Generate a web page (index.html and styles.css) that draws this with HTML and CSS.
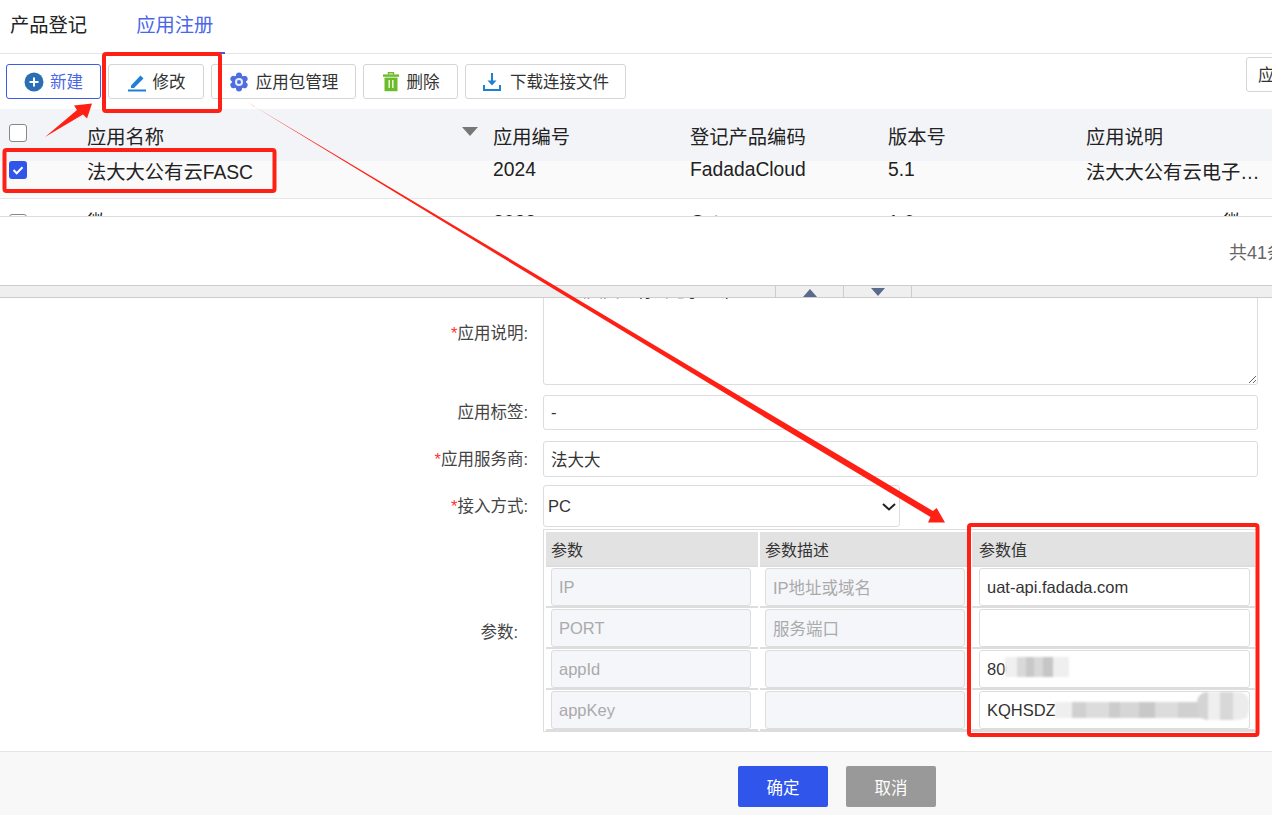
FILE: index.html
```html
<!DOCTYPE html>
<html lang="zh-CN">
  <head>
    <meta charset="UTF-8" />
    <title>应用注册</title>
    <link rel="stylesheet" href="styles.css">
  </head>
  <body>
    <div class="tabs">
      <a class="tab">产品登记</a>
      <a class="tab tab-active">应用注册</a>
    </div>

    <div class="toolbar">
      <button class="btn btn-primary">
        <svg width="20" height="20" viewBox="0 0 20 20"><circle cx="10" cy="10" r="9.5" fill="#2a6fb5"/><path d="M10 5.5v9M5.5 10h9" stroke="#fff" stroke-width="2"/></svg>
        新建
      </button>
      <button class="btn btn-edit">
        <svg width="20" height="20" viewBox="0 0 20 20"><path d="M4 13.5 13.5 3.5l3 3-9.5 9.5H4z" fill="#1f7fd6"/><rect x="1" y="17.5" width="18" height="2" fill="#1f7fd6"/></svg>
        修改
      </button>
      <button class="btn btn-pkg">
        <svg width="20" height="20" viewBox="0 0 20 20"><g stroke="#4f6ee0" stroke-width="6" stroke-linecap="round"><path d="M10 3.500v13"/><path d="M4.400 6.800l11.200 6.400"/><path d="M4.400 13.200l11.200-6.400"/></g><circle cx="10" cy="10" r="7" fill="#4f6ee0"/><circle cx="10" cy="10" r="4" fill="#e8ecfb"/><circle cx="10" cy="10" r="2" fill="#4f6ee0"/></svg>
        应用包管理
      </button>
      <button class="btn btn-del">
        <svg width="18" height="20" viewBox="0 0 18 20"><path d="M6.500 2.500V.8h5v1.700" fill="none" stroke="#6cbb2a" stroke-width="1.400"/><rect x="1" y="2.400" width="16" height="2.400" fill="#6cbb2a"/><rect x="2.500" y="5.600" width="13" height="13.600" fill="#6cbb2a"/><rect x="6.400" y="8" width="1.600" height="8" fill="#e6f2d8"/><rect x="10" y="8" width="1.600" height="8" fill="#e6f2d8"/></svg>
        删除
      </button>
      <button class="btn btn-down">
        <svg width="20" height="20" viewBox="0 0 20 20"><path d="M10 1v11" stroke="#1f80d0" stroke-width="2"/><path d="M5.500 8.500 10 13.500l4.500-5z" fill="#1f80d0"/><path d="M2 13v5h16v-5" fill="none" stroke="#1f80d0" stroke-width="2"/></svg>
        下载连接文件
      </button>
      <button class="btn btn-right">应用</button>
    </div>

    <div class="grid-wrap">
      <table class="grid">
        <colgroup>
          <col class="col-check"><col class="col-name"><col class="col-code"><col class="col-ver"><col class="col-desc">
        </colgroup>
        <thead>
          <tr>
            <th><span class="check"></span></th>
            <th><span class="sort"></span>应用名称</th>
            <th>应用编号</th>
            <th>登记产品编码</th>
            <th>版本号</th>
            <th>应用说明</th>
          </tr>
        </thead>
        <tbody>
          <tr class="row-selected">
            <td>
              <span class="check check-on">
                <svg width="18" height="18" viewBox="0 0 18 18"><path d="M4.500 9l3.200 3.200 5.800-6" fill="none" stroke="#fff" stroke-width="2"/></svg>
              </span>
            </td>
            <td class="cell-low">法大大公有云FASC</td>
            <td>2024</td>
            <td>FadadaCloud</td>
            <td>5.1</td>
            <td class="cell-low cell-desc"><div class="ellipsis">法大大公有云电子签章平台服务</div></td>
          </tr>
          <tr>
            <td><span class="check"></span></td>
            <td>微</td>
            <td>2023</td>
            <td>Cxt</td>
            <td>1.0</td>
            <td><div class="far-right">微</div></td>
          </tr>
        </tbody>
      </table>
    </div>

    <div class="pager"><span>共41条</span></div>

    <div class="splitter">
      <span class="split-btn"><i class="tri-up"></i></span>
      <span class="split-btn"><i class="tri-down"></i></span>
    </div>

    <form class="form">
      <div class="form-row row-desc">
        <label class="form-label label-desc"><em>*</em>应用说明:</label>
        <textarea class="input area">法大大公有云电子签章</textarea>
      </div>
      <div class="form-row row-tag">
        <label class="form-label">应用标签:</label>
        <input class="input" type="text" value="-" />
      </div>
      <div class="form-row row-vendor">
        <label class="form-label"><em>*</em>应用服务商:</label>
        <input class="input" type="text" value="法大大" />
      </div>
      <div class="form-row row-mode">
        <label class="form-label"><em>*</em>接入方式:</label>
        <select class="input select">
          <option>PC</option>
        </select>
      </div>
      <div class="form-row row-params">
        <label class="form-label label-params">参数:</label>
        <table class="params">
          <thead>
            <tr><th>参数</th><th>参数描述</th><th>参数值</th></tr>
          </thead>
          <tbody>
            <tr>
              <td><input class="input" disabled value="IP" /></td>
              <td><input class="input" disabled value="IP地址或域名" /></td>
              <td><input class="input" value="uat-api.fadada.com" /></td>
            </tr>
            <tr>
              <td><input class="input" disabled value="PORT" /></td>
              <td><input class="input" disabled value="服务端口" /></td>
              <td><input class="input" value="" /></td>
            </tr>
            <tr>
              <td><input class="input" disabled value="appId" /></td>
              <td><input class="input" disabled value="" /></td>
              <td class="masked"><input class="input" value="800" /><span class="mosaic mosaic-id"></span></td>
            </tr>
            <tr>
              <td><input class="input" disabled value="appKey" /></td>
              <td><input class="input" disabled value="" /></td>
              <td class="masked"><input class="input" value="KQHSDZ" /><span class="mosaic mosaic-key"></span></td>
            </tr>
          </tbody>
        </table>
      </div>
    </form>

    <div class="footer">
      <button class="foot-btn foot-ok">确定</button>
      <button class="foot-btn foot-cancel">取消</button>
    </div>

    <!-- red notes drawn on top of the screenshot -->
    <svg class="notes" width="1272" height="815" viewBox="0 0 1272 815">
      <rect x="104" y="54" width="116" height="57" rx="2" />
      <rect x="4.500" y="150" width="270" height="41" rx="2" />
      <rect x="969" y="525" width="288.500" height="210" rx="2" />
      <path class="solid" d="M45 137 77 110 74 105.500 92 103.500 87 118.500 83 114.500z" />
      <path class="solid" d="M247 102 420.500 205.400 601 313.200 751.400 403 933 511 936.700 508 945 522.500 928 522.500 930.500 517 748.600 407.600 599 316.600 419.500 207.200z" />
    </svg>
  </body>
</html>
```

FILE: styles.css
```css
* {
  box-sizing: border-box;
}
html,
body {
  margin: 0;
  height: 815px;
  overflow: hidden;
}
body {
  position: relative;
  display: flex;
  flex-direction: column;
  font-family: "Liberation Sans", "Noto Sans CJK SC", sans-serif;
  color: #333;
  background-color: #fff;
}

/* tabs */
.tabs {
  display: flex;
  height: 54px;
  padding-left: 10px;
  border-bottom: 1px solid #e6e6e6;
  flex-shrink: 0;
}
.tab {
  font-size: 19.300px;
  line-height: 52px;
  height: 54px;
  color: #222;
}
.tab-active {
  color: #4a67e8;
  margin-left: 38px;
  padding: 0 12px 0 11px;
  border-bottom: 2px solid #3b5be8;
}

/* toolbar */
.toolbar {
  display: flex;
  gap: 7px;
  height: 55px;
  padding: 10px 0 0 6px;
  flex-shrink: 0;
  overflow: hidden;
}
.btn {
  display: flex;
  align-items: center;
  justify-content: center;
  gap: 6px;
  height: 35px;
  padding: 0 0 2px;
  font-family: inherit;
  font-size: 16.500px;
  color: #333;
  background-color: #fff;
  border: 1px solid #d5d5d5;
  border-radius: 3px;
  flex-shrink: 0;
}
.btn svg {
  margin-top: 2px;
}
.btn-primary {
  width: 95px;
  color: #4a67e8;
  border-color: #3b5be8;
}
.btn-edit {
  width: 96px;
}
.btn-pkg {
  width: 145px;
  gap: 7px;
}
.btn-del {
  width: 95px;
  gap: 7px;
}
.btn-down {
  width: 161px;
  gap: 8px;
}
.btn-right {
  width: 60px;
  margin: -7px 0 0 613px;
  justify-content: flex-start;
  padding-left: 11px;
}

/* grid */
.grid-wrap {
  height: 108px;
  overflow: hidden;
  border-bottom: 1px solid #ddd;
  flex-shrink: 0;
}
.grid {
  width: 1272px;
  table-layout: fixed;
  border-collapse: collapse;
  font-size: 19.300px;
  color: #222;
}
.col-check {
  width: 87px;
}
.col-name {
  width: 406px;
}
.col-code {
  width: 197px;
}
.col-ver {
  width: 198px;
}
.col-desc {
  width: 198px;
}
.grid th {
  height: 52px;
  padding: 18px 0 0;
  font-weight: normal;
  text-align: left;
  vertical-align: top;
  line-height: 22px;
  background-color: #f3f4f8;
}
.grid th:first-child {
  padding-top: 15px;
}
.grid td {
  padding: 14px 0 0;
  vertical-align: top;
  line-height: 19px;
  height: 50px;
}
.grid td:first-child {
  padding-top: 15px;
}
.row-selected td {
  background-color: #fafafa;
  border-bottom: 1px solid #e6e6e6;
}
.grid .row-selected td {
  height: 37px;
  padding-top: 0;
  line-height: 17px;
}
.grid .row-selected .cell-low {
  padding-top: 2px;
  line-height: 19px;
}
.ellipsis {
  width: 174px;
  white-space: nowrap;
  overflow: hidden;
  text-overflow: ellipsis;
}
.far-right {
  padding-left: 137px;
}
.check {
  display: block;
  width: 18px;
  height: 18px;
  margin-left: 9px;
  border: 1px solid #888;
  border-radius: 3px;
  background-color: #fff;
}
.check-on {
  border: none;
  background-color: #2f55eb;
}
.check-on svg {
  display: block;
}
.sort {
  float: right;
  width: 0;
  height: 0;
  margin: 0 15px 0 0;
  border-left: 8px solid transparent;
  border-right: 8px solid transparent;
  border-top: 9px solid #777;
}

/* pager */
.pager {
  display: flex;
  justify-content: flex-end;
  align-items: center;
  height: 68px;
  margin-right: -13px;
  font-size: 18px;
  color: #666;
  flex-shrink: 0;
}

/* splitter */
.splitter {
  display: flex;
  height: 13px;
  padding-left: 775px;
  background-color: #efefef;
  border-top: 1px solid #ccc;
  border-bottom: 1px solid #ccc;
  flex-shrink: 0;
}
.split-btn {
  display: flex;
  justify-content: center;
  width: 68px;
  border-left: 1px solid #ccc;
}
.split-btn:last-child {
  width: 69px;
  border-right: 1px solid #ccc;
}
.tri-up,
.tri-down {
  width: 0;
  height: 0;
  margin-top: 3px;
  border-left: 7px solid transparent;
  border-right: 7px solid transparent;
}
.tri-up {
  border-bottom: 8px solid #5a6a8c;
}
.tri-down {
  margin-top: 2px;
  border-top: 8px solid #5a6a8c;
}

/* form */
.form {
  height: 453px;
  overflow: hidden;
  flex-shrink: 0;
  font-size: 16.500px;
}
.form-row {
  display: flex;
  align-items: center;
  padding-right: 14px;
}
.form-label {
  width: 543px;
  padding: 0 15px 3px 0;
  text-align: right;
  color: #444;
  flex-shrink: 0;
}
.form-label em {
  color: #f33;
  font-style: normal;
}
.input {
  display: block;
  width: 100%;
  height: 100%;
  padding: 0 7px;
  font-family: inherit;
  font-size: 16.500px;
  color: #333;
  background-color: #fff;
  border: 1px solid #ddd;
  border-radius: 3px;
}
.row-desc {
  align-items: flex-start;
  height: 107px;
  margin-top: -20px;
}
.label-desc {
  padding-top: 42px;
}
.area {
  padding-top: 2px;
  text-indent: 19px;
  line-height: 20px;
}
.row-tag {
  height: 35px;
  margin-top: 10px;
}
.row-vendor {
  height: 36px;
  margin-top: 11px;
}
.row-mode {
  height: 42px;
  margin-top: 8px;
}
.select {
  width: 357px;
  padding: 0 0 0 4px;
  appearance: none;
  background: #fff url("data:image/svg+xml,%3Csvg xmlns='http://www.w3.org/2000/svg' width='14' height='8'%3E%3Cpath d='M1 1l6 5.500L13 1' fill='none' stroke='%23222' stroke-width='2'/%3E%3C/svg%3E") no-repeat 338px 17px;
}
.row-params {
  margin-top: 2px;
}
.label-params {
  padding: 0 25px 0 0;
}

/* parameter table */
.params {
  width: 715px;
  table-layout: fixed;
  border: 1px solid #ddd;
  border-collapse: separate;
  border-spacing: 2px 0;
  padding-top: 2px;
  flex-shrink: 0;
}
.params th {
  height: 35px;
  padding: 0 0 0 5px;
  font-weight: normal;
  font-size: 16px;
  text-align: left;
  color: #333;
  background-color: #e2e2e2;
  border-bottom: 2px solid #ddd;
}
.params th:nth-child(1) {
  width: 212px;
}
.params th:nth-child(2) {
  width: 210px;
}
.params th:nth-child(3) {
  padding-left: 7px;
}
.params td {
  height: 41px;
  padding: 1px 5px 0;
  border-bottom: 2px solid #ddd;
}
.params td:nth-child(1) {
  padding-right: 7px;
}
.params td:nth-child(3) {
  padding-left: 7px;
}
.params .input {
  height: 38px;
}
.params .input:disabled {
  color: #aaa;
  background-color: #f5f6fa;
}
.masked {
  position: relative;
}

/* blurred out secrets */
.mosaic {
  position: absolute;
  filter: blur(0.8px);
}
.mosaic-id {
  left: 33px;
  top: 8px;
  width: 64px;
  height: 20px;
  background: linear-gradient(90deg, #f0f0f0 0 18%, #d9d9d9 18% 33%, #c8c8c8 33% 45%, #d8d8d8 45% 60%, #c6c6c6 60% 75%, #efefef 75% 100%);
}
.mosaic-key {
  left: 83px;
  top: 12px;
  width: 192px;
  height: 16px;
  background: linear-gradient(90deg, #efefef 0 9%, #d0d0d0 9% 16%, #dcdcdc 16% 28%, #cccccc 28% 34%, #d6d6d6 34% 44%, #c8c8c8 44% 52%, #dcdcdc 52% 64%, #d0d0d0 64% 76%, #c8c8c8 76% 84%, #d4d4d4 84% 92%, #dedede 92% 100%);
}
.mosaic-key::after {
  content: "";
  position: absolute;
  right: -2px;
  top: -10px;
  width: 52px;
  height: 28px;
  border-radius: 10px;
  background: linear-gradient(90deg, #d4d4d4 0 22%, #efefef 22% 45%, #d8d8d8 45% 70%, #ececec 70% 100%);
}

/* footer */
.footer {
  display: flex;
  gap: 18px;
  flex: 1;
  padding: 14px 0 0 738px;
  background-color: #f8f8f8;
  border-top: 1px solid #e5e5e5;
}
.foot-btn {
  width: 90px;
  height: 41px;
  font-family: inherit;
  font-size: 16.500px;
  color: #fff;
  border: none;
  border-radius: 2px;
}
.foot-ok {
  background-color: #2f55eb;
}
.foot-cancel {
  background-color: #999;
}

/* annotations */
.notes {
  position: absolute;
  left: 0;
  top: 0;
  pointer-events: none;
}
.notes rect {
  fill: none;
  stroke: #ff2015;
  stroke-width: 4;
}
.notes .solid {
  fill: #ff2015;
}
```
